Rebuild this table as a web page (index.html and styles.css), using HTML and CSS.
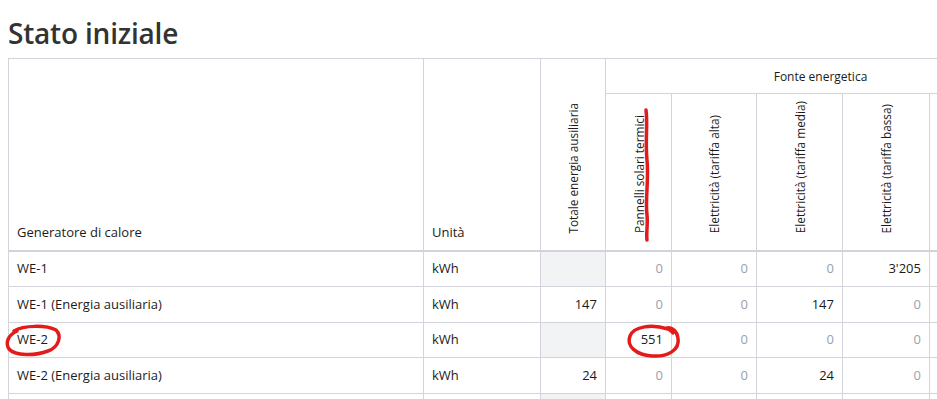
FILE: index.html
```html
<!DOCTYPE html>
<html lang="it">
<head>
<meta charset="utf-8">
<title>Stato iniziale</title>
<link rel="stylesheet" href="styles.css">
</head>
<body>
<div class="page">
  <h2 class="title">Stato iniziale</h2>
  <div class="table-wrap">
    <table class="grid">
      <colgroup>
        <col class="c-gen"><col class="c-unit"><col class="c-tot"><col class="c-pan"><col class="c-e1"><col class="c-e2"><col class="c-e3"><col class="c-e4">
      </colgroup>
      <thead>
        <tr class="hrow-1">
          <th rowspan="2" class="h-text">Generatore di calore</th>
          <th rowspan="2" class="h-text">Unità</th>
          <th rowspan="2" class="h-vert"><span>Totale energia ausiliaria</span></th>
          <th colspan="5" class="h-group">Fonte energetica</th>
        </tr>
        <tr class="hrow-2">
          <th class="h-vert"><span>Pannelli solari termici</span></th>
          <th class="h-vert"><span>Elettricità (tariffa alta)</span></th>
          <th class="h-vert"><span>Elettricità (tariffa media)</span></th>
          <th class="h-vert"><span>Elettricità (tariffa bassa)</span></th>
          <th class="h-vert"></th>
        </tr>
      </thead>
      <tbody>
        <tr>
          <td>WE-1</td><td>kWh</td><td class="num empty"></td>
          <td class="num zero">0</td><td class="num zero">0</td><td class="num zero">0</td><td class="num">3'205</td><td></td>
        </tr>
        <tr>
          <td>WE-1 (Energia ausiliaria)</td><td>kWh</td><td class="num">147</td>
          <td class="num zero">0</td><td class="num zero">0</td><td class="num">147</td><td class="num zero">0</td><td></td>
        </tr>
        <tr>
          <td>WE-2</td><td>kWh</td><td class="num empty"></td>
          <td class="num">551</td><td class="num zero">0</td><td class="num zero">0</td><td class="num zero">0</td><td></td>
        </tr>
        <tr>
          <td>WE-2 (Energia ausiliaria)</td><td>kWh</td><td class="num">24</td>
          <td class="num zero">0</td><td class="num zero">0</td><td class="num">24</td><td class="num zero">0</td><td></td>
        </tr>
        <tr>
          <td></td><td></td><td class="num empty"></td>
          <td></td><td></td><td></td><td></td><td></td>
        </tr>
      </tbody>
    </table>
  </div>
  <svg class="marks" width="937" height="399" viewBox="0 0 937 399" aria-hidden="true">
    <path d="M646 110 C648 125 645 140 647 160 C649 180 645 200 647 215 C648 225 646 233 647 240" />
    <path d="M14 331 C24 325 46 325 56 330 C62 336 59 347 48 351 C35 356 15 356 9 349 C5 343 8 335 17 331" />
    <path d="M668 329 C652 324 634 326 630 336 C626 346 636 355 652 356 C668 357 680 350 678 338 C677 331 672 327 667 328 C670 330 672 331 673 333" />
  </svg>
</div>
</body>
</html>
```

FILE: styles.css
```css
html, body {
  margin: 0;
  padding: 0;
  background: #ffffff;
}

.page {
  position: relative;
  width: 937px;
  height: 399px;
  overflow: hidden;
  padding-left: 8px;
  box-sizing: border-box;
  font-family: "Open Sans", "Noto Sans", sans-serif;
  color: #1b1b1b;
}

.title {
  margin: 0;
  padding-top: 15px;
  height: 58px;
  box-sizing: border-box;
  font-size: 28px;
  line-height: 36px;
  font-weight: 600;
  color: #333333;
  letter-spacing: -0.2px;
}

.table-wrap {
  width: 929px;
  overflow: hidden;
}

.grid {
  border-collapse: collapse;
  table-layout: fixed;
  width: 1027px;
  font-size: 13px;
}

.c-gen { width: 415px; }
.c-unit { width: 117px; }
.c-tot { width: 65px; }
.c-pan { width: 66px; }
.c-e1 { width: 85px; }
.c-e2 { width: 86px; }
.c-e3 { width: 87px; }
.c-e4 { width: 106px; }

.grid th,
.grid td {
  border: 1px solid #d3d3db;
  padding: 0 8px;
  font-weight: 400;
}

.hrow-1 { height: 35px; }
.hrow-2 { height: 157px; }

.h-text {
  text-align: left;
  vertical-align: bottom;
  padding-bottom: 9px !important;
  line-height: 17px;
}

.h-group {
  text-align: center;
  vertical-align: middle;
  font-size: 12px;
}

.h-vert {
  vertical-align: bottom;
  text-align: center;
  padding-bottom: 13px !important;
  font-size: 11.8px;
}

.h-vert span {
  display: inline-block;
  writing-mode: vertical-rl;
  transform: rotate(180deg);
  line-height: 16px;
  white-space: nowrap;
}

.grid thead tr:last-child th,
.grid thead th[rowspan] {
  border-bottom: 2px solid #d3d3db;
}

.grid tbody td {
  height: 34.5px;
  vertical-align: middle;
  line-height: 17px;
  white-space: nowrap;
}

.num { text-align: right; }
.zero { color: #9ba0aa; }
.empty { background: #f2f3f5; }

.marks {
  position: absolute;
  top: 0;
  left: 0;
  pointer-events: none;
}

.marks path {
  fill: none;
  stroke: #e31b1b;
  stroke-width: 3.5;
  stroke-linecap: round;
  stroke-linejoin: round;
}
```
